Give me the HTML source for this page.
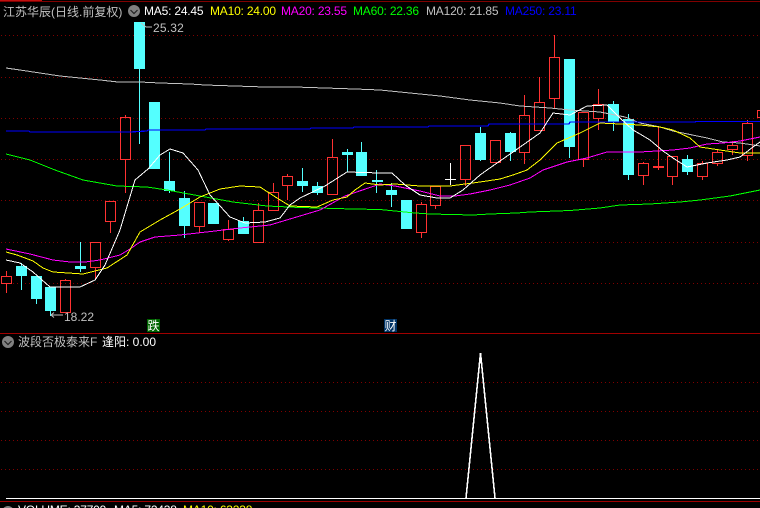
<!DOCTYPE html>
<html><head><meta charset="utf-8"><style>
html,body{margin:0;padding:0;background:#000;width:760px;height:508px;overflow:hidden}
svg{display:block;position:absolute;left:0;top:0}
text{font-family:"Liberation Sans","WenQuanYi Zen Hei","Noto Sans CJK SC",sans-serif;font-size:12px}
.l{fill:none;shape-rendering:crispEdges;stroke-width:1}
</style></head><body>
<svg width="760" height="508" viewBox="0 0 760 508" xmlns="http://www.w3.org/2000/svg">
<defs><pattern id="dot" patternUnits="userSpaceOnUse" x="1" y="0" width="4" height="508"><rect width="1" height="508" fill="#800000"/></pattern></defs>
<rect width="760" height="508" fill="#000"/>
<g shape-rendering="crispEdges">
<path d="M0 1.5H760" stroke="#800000"/>
<path d="M0 0.5H42" stroke="#c01010"/>
<path d="M0 333.5H760M0 501.5H760" stroke="#a00000"/>
<g fill="url(#dot)">
<rect y="35" width="760" height="1"/><rect y="77" width="760" height="1"/><rect y="118" width="760" height="1"/><rect y="159" width="760" height="1"/><rect y="200" width="760" height="1"/><rect y="242" width="760" height="1"/><rect y="283" width="760" height="1"/><rect y="382" width="760" height="1"/><rect y="411" width="760" height="1"/><rect y="440" width="760" height="1"/><rect y="469" width="760" height="1"/>
</g>
<path fill="none" stroke="#ff3232" d="M6.5 271V276M6.5 283V293M1.5 276.5h10v7h-10z
M65.5 279V280M60.5 280.5h10v32h-10z
M95.5 267V279M90.5 242.5h10v25h-10z
M110.5 221V233M105.5 201.5h10v20h-10z
M125.5 115V117M125.5 159V193M120.5 117.5h10v42h-10z
M199.5 226V233M194.5 202.5h10v24h-10z
M228.5 220V229M228.5 239V241M223.5 229.5h10v10h-10z
M258.5 203V210M253.5 210.5h10v32h-10z
M273.5 183V192M268.5 192.5h10v18h-10z
M287.5 174V176M287.5 185V200M282.5 176.5h10v9h-10z
M332.5 139V157M327.5 157.5h10v37h-10z
M421.5 202V204M421.5 232V238M416.5 204.5h10v28h-10z
M435.5 205V209M430.5 186.5h10v19h-10z
M465.5 179V186M460.5 145.5h10v34h-10z
M495.5 140.5V141M490.5 140.5h10v22h-10z
M524.5 95V115M524.5 152V164M519.5 115.5h10v37h-10z
M539.5 77V102M534.5 102.5h10v28h-10z
M554.5 35V57M554.5 98V108M549.5 57.5h10v41h-10z
M583.5 159V167M578.5 112.5h10v47h-10z
M598.5 89V104M598.5 118V130M593.5 104.5h10v14h-10z
M643.5 162V163M643.5 175V185M638.5 163.5h10v12h-10z
M672.5 176V185M667.5 156.5h10v20h-10z
M702.5 161V163M702.5 176V180M697.5 163.5h10v13h-10z
M717.5 150V152M717.5 163V166M712.5 152.5h10v11h-10z
M732.5 141V145M732.5 149V155M727.5 145.5h10v4h-10z
M747.5 120V123M747.5 155V161M742.5 123.5h10v32h-10z
M757.5 110.5h4v7h-4z
M658.5 126V170"/>
<rect x="653" y="166" width="11" height="2" fill="#ff3232"/>
<g fill="#54ffff">
<rect x="21" y="263" width="1" height="27"/><rect x="16" y="266" width="11" height="10"/>
<rect x="36" y="276" width="1" height="28"/><rect x="31" y="276" width="11" height="23"/>
<rect x="50" y="287" width="1" height="29"/><rect x="45" y="287" width="11" height="24"/>
<rect x="80" y="242" width="1" height="30"/><rect x="75" y="266" width="11" height="3"/>
<rect x="139" y="22" width="1" height="122"/><rect x="134" y="22" width="11" height="47"/>
<rect x="149" y="102" width="11" height="67"/>
<rect x="169" y="152" width="1" height="41"/><rect x="164" y="181" width="11" height="10"/>
<rect x="184" y="191" width="1" height="47"/><rect x="179" y="198" width="11" height="28"/>
<rect x="208" y="203" width="11" height="21"/>
<rect x="243" y="217" width="1" height="17"/><rect x="238" y="221" width="11" height="13"/>
<rect x="302" y="168" width="1" height="24"/><rect x="297" y="181" width="11" height="5"/>
<rect x="317" y="182" width="1" height="13"/><rect x="312" y="186" width="11" height="7"/>
<rect x="347" y="149" width="1" height="23"/><rect x="342" y="152" width="11" height="3"/>
<rect x="361" y="142" width="1" height="34"/><rect x="356" y="152" width="11" height="24"/>
<rect x="376" y="170" width="1" height="23"/><rect x="372" y="180" width="11" height="2"/>
<rect x="391" y="183" width="1" height="24"/><rect x="386" y="190" width="11" height="5"/>
<rect x="401" y="200" width="11" height="29"/>
<rect x="480" y="127" width="1" height="34"/><rect x="475" y="133" width="11" height="27"/>
<rect x="510" y="132" width="1" height="29"/><rect x="505" y="133" width="11" height="19"/>
<rect x="569" y="59" width="1" height="99"/><rect x="564" y="59" width="11" height="88"/>
<rect x="613" y="101" width="1" height="30"/><rect x="608" y="104" width="11" height="18"/>
<rect x="628" y="114" width="1" height="66"/><rect x="623" y="119" width="11" height="56"/>
<rect x="687" y="155" width="1" height="20"/><rect x="682" y="159" width="11" height="13"/>
</g>
<path d="M445 179.5H456M450.5 163V185" stroke="#fff"/>
</g>
<polyline class="l" stroke="#c0c0c0" points="6,68 20,70 40,73 60,76 80,78 100,80 118,82 140,82 160,83 190,84 205,85 235,86 265,87 295,87 325,88 355,89 380,90 400,92 420,94 440,96 470,100 500,103 520,106 550,108 570,110 600,112 625,117 640,123 660,127 673,131 707,138 723,142 740,143 760,146"/>
<polyline class="l" stroke="#0000ff" style="stroke-width:1.2" points="6,131 29,131 30,132 130,132 147,131 148,130 205,130 206,129 310,129 311,128 353,128 354,127 428,127 429,126 488,126 489,124 569,124 570,122 695,122 696,121.5 760,121.5"/>
<polyline class="l" stroke="#00ff00" points="6,154 30,160 55,170 83,180 117,186 147,187 167,190 200,196 233,202 267,206 300,207.5 353,209 380,209.5 415,213 430,214 473,215 490,214 517,213 530,212 570,210.5 600,208 620,205 650,204 680,202 700,200 730,196 760,190"/>
<polyline class="l" stroke="#ff00ff" points="6,249 30,254 53,260 70,262 85,262 100,260 120,255 130,249 140,242 155,237 180,235 215,231 240,228 270,225 290,219 320,210 345,196 380,184 395,186 420,191 440,196 455,196 470,194 490,190 510,185 530,178 543,170 567,162 587,158 607,152 640,152 673,150 690,148 707,144 723,143 740,141 760,137"/>
<polyline class="l" stroke="#ffff00" points="6,252 17,255 33,261 43,268 53,272 83,274 107,268 127,255 140,232 160,220 180,209 200,197 220,189 240,186 260,187 277,198 290,206 317,207 333,200 347,197 355,190 365,183 380,185 395,184 420,186 450,186 480,182 500,179 513,175 527,170 540,160 557,143 580,133 600,123 640,125 660,127 673,130 690,138 700,147 720,150 740,153 760,153"/>
<polyline class="l" stroke="#ffffff" points="6,260 20,263 33,272 50,287 80,287 95,280 105,265 120,230 135,180 148,169 160,155 170,149 183,153 198,170 210,195 230,217 245,223 265,222 280,218 290,205 300,198 325,186 347,172 380,173 392,173 405,185 420,195 437,198 450,198 463,190 480,175 487,170 513,152 540,133 553,113 570,115 587,106 607,105 620,118 633,130 640,134 650,140 663,151 673,158 687,167 707,163 727,160 740,157 753,147 760,142"/>
<polyline class="l" stroke="#ffffff" style="stroke-width:1.6" points="466,498 480.5,353 495,498"/>
<rect x="6" y="498" width="754" height="1" fill="#ffffff" shape-rendering="crispEdges"/>

<path d="M141 23L146 27H152" fill="none" stroke="#c0c0c0"/>
<text x="153" y="32" fill="#c0c0c0" letter-spacing=".2">25.32</text>
<path d="M51 315H63M51 315l3-2.500M51 315l3 2.500" fill="none" stroke="#c0c0c0"/>
<text x="64" y="321" fill="#c0c0c0">18.22</text>

<text x="3" y="16" fill="#c0c0c0">江苏华辰(日线.前复权)</text>
<circle cx="134" cy="11" r="6" fill="#808080"/>
<path d="M130.500 10l3.500 3.500 3.500-3.500" fill="none" stroke="#202020" stroke-width="1.200"/>
<text x="144" y="15" fill="#ffffff" letter-spacing="-.2">MA5: 24.45</text>
<text x="210" y="15" fill="#ffff00" letter-spacing="-.2">MA10: 24.00</text>
<text x="281" y="15" fill="#ff00ff" letter-spacing="-.2">MA20: 23.55</text>
<text x="353" y="15" fill="#00ff00" letter-spacing="-.2">MA60: 22.36</text>
<text x="426" y="15" fill="#c0c0c0" letter-spacing="-.2">MA120: 21.85</text>
<text x="505" y="15" fill="#0000ff" letter-spacing="-.2">MA250: 23.11</text>

<rect x="147" y="319" width="13" height="13" fill="#006400"/>
<text x="147.500" y="330" fill="#fff">跌</text>
<rect x="384" y="319" width="13" height="13" fill="#003366"/>
<text x="384.500" y="330" fill="#fff">财</text>

<circle cx="8" cy="342" r="6" fill="#808080"/>
<path d="M4.500 341l3.500 3.500 3.500-3.500" fill="none" stroke="#202020" stroke-width="1.200"/>
<text x="18" y="346" fill="#c0c0c0">波段否极泰来F</text>
<text x="102" y="346" fill="#ffffff">逢阳: 0.00</text>

<circle cx="8" cy="512" r="6" fill="#808080"/>
<text x="18" y="514" fill="#ffffff" letter-spacing="-.2">VOLUME: 37709</text>
<text x="114" y="514" fill="#ffffff" letter-spacing="-.2">MA5: 72438</text>
<text x="183" y="514" fill="#ffff00" letter-spacing="-.2">MA10: 63238</text>
</svg>
</body></html>
